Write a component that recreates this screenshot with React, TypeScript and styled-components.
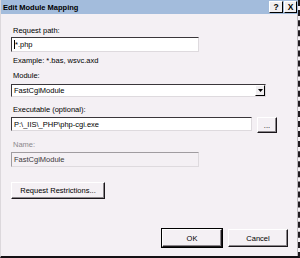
import styled, { createGlobalStyle } from "styled-components";

const GlobalStyle = createGlobalStyle`
  html, body {
    margin: 0;
    padding: 0;
    background: #f4f0f4;
  }
  body {
    font-family: "Liberation Sans", Arial, sans-serif;
    font-size: 7.5px;
    color: #000000;
  }
`;

export default function App() {
  return (
    <>
      <GlobalStyle />
      <Window>
        <TitleBar>
          <Title>Edit Module Mapping</Title>
          <CaptionButtons>
            <CaptionButton $width={14}>?</CaptionButton>
            <CaptionButton $width={13}>X</CaptionButton>
          </CaptionButtons>
        </TitleBar>
        <Body>
          <Label>Request path:</Label>
          <TextBox $width={188} $height={15} $top={2}>
            <Caret />*.php
          </TextBox>
          <Hint>Example: *.bas, wsvc.axd</Hint>

          <Label $top={6}>Module:</Label>
          <SelectBox>
            FastCgiModule
            <DropArrow>
              <svg width="5" height="3" viewBox="0 0 5 3">
                <path d="M0 0 H5 L2.5 3 Z" fill="#000" />
              </svg>
            </DropArrow>
          </SelectBox>

          <Label $top={8}>Executable (optional):</Label>
          <Row>
            <TextBox $width={241} $height={14}>
              P:\_IIS\_PHP\php-cgi.exe
            </TextBox>
            <PushButton $width={20} $height={16}>
              ...
            </PushButton>
          </Row>

          <Label $top={7} $disabled>
            Name:
          </Label>
          <TextBox $width={188} $height={15} $top={3} $disabled>
            FastCgiModule
          </TextBox>

          <ButtonSlot>
            <PushButton $width={94} $height={17}>
              Request Restrictions...
            </PushButton>
          </ButtonSlot>

          <Footer>
            <PushButton $width={60} $height={18} $default>
              OK
            </PushButton>
            <PushButton $width={60} $height={18}>
              Cancel
            </PushButton>
          </Footer>
        </Body>
      </Window>
    </>
  );
}

const Window = styled.div`
  width: 300px;
  height: 258px;
  box-sizing: border-box;
  background: #f4f0f4;
  border-left: 1px solid #dcd8dc;
  border-right: 2px dashed #1e1a1e;
  border-bottom: 2px solid #141014;
  box-shadow: inset -1px 0 0 #bdb9bd;
  display: flex;
  flex-direction: column;
  overflow: hidden;
`;

const TitleBar = styled.div`
  height: 14px;
  background: #a3bcdc;
  display: flex;
  align-items: center;
  justify-content: space-between;
  padding-left: 2px;
  padding-right: 1px;
`;

const Title = styled.span`
  font-weight: 700;
  font-size: 7.5px;
  color: #000000;
`;

const CaptionButtons = styled.div`
  display: flex;
  gap: 1px;
`;

const CaptionButton = styled.div<{ $width: number }>`
  width: ${(p) => p.$width}px;
  height: 12px;
  box-sizing: border-box;
  background: #f0eef0;
  border-top: 1px solid #ffffff;
  border-left: 1px solid #ffffff;
  border-right: 1px solid #000000;
  border-bottom: 1px solid #000000;
  display: flex;
  align-items: center;
  justify-content: center;
  font-weight: 700;
  font-size: 8.5px;
  line-height: 1;
`;

const Body = styled.div`
  flex: 1;
  display: flex;
  flex-direction: column;
  align-items: flex-start;
  padding: 12px 10px 0 10px;
`;

const Label = styled.div<{ $top?: number; $disabled?: boolean }>`
  height: 9px;
  line-height: 9px;
  padding-left: 2px;
  margin-top: ${(p) => p.$top ?? 0}px;
  color: ${(p) => (p.$disabled ? "#8c888c" : "#000000")};
`;

const TextBox = styled.div<{
  $width: number;
  $height: number;
  $top?: number;
  $disabled?: boolean;
}>`
  width: ${(p) => p.$width}px;
  height: ${(p) => p.$height}px;
  margin-top: ${(p) => p.$top ?? 0}px;
  box-sizing: border-box;
  background: ${(p) => (p.$disabled ? "#f4f0f4" : "#ffffff")};
  border-top: 1px solid ${(p) => (p.$disabled ? "#a09ca0" : "#3a363a")};
  border-left: 1px solid ${(p) => (p.$disabled ? "#a09ca0" : "#3a363a")};
  border-right: 1px solid #dedade;
  border-bottom: 1px solid #dedade;
  padding-left: 2px;
  display: flex;
  align-items: center;
  color: ${(p) => (p.$disabled ? "#3c383c" : "#000000")};
  white-space: nowrap;
`;

const Caret = styled.span`
  display: inline-block;
  width: 1px;
  height: 9px;
  background: #000000;
`;

const Hint = styled.div`
  height: 9px;
  line-height: 9px;
  margin-top: 4px;
  padding-left: 2px;
`;

const SelectBox = styled.div`
  width: 255px;
  height: 13px;
  margin-top: 4px;
  box-sizing: border-box;
  background: #ffffff;
  border-top: 1px solid #3a363a;
  border-left: 1px solid #3a363a;
  border-right: 1px solid #dedade;
  border-bottom: 1px solid #dedade;
  padding-left: 2px;
  display: flex;
  align-items: center;
  justify-content: space-between;
`;

const DropArrow = styled.div`
  width: 10px;
  height: 11px;
  box-sizing: border-box;
  background: #f0eef0;
  border-top: 1px solid #ffffff;
  border-left: 1px solid #ffffff;
  border-right: 1px solid #000000;
  border-bottom: 1px solid #000000;
  display: flex;
  align-items: center;
  justify-content: center;
`;

const Row = styled.div`
  display: flex;
  align-items: flex-start;
  gap: 5px;
  margin-top: 3px;
`;

const PushButton = styled.div<{
  $width: number;
  $height: number;
  $default?: boolean;
}>`
  width: ${(p) => p.$width}px;
  height: ${(p) => p.$height}px;
  box-sizing: border-box;
  background: #f4f0f4;
  border-top: 1px solid #ffffff;
  border-left: 1px solid #ffffff;
  border-right: 1px solid #1a161a;
  border-bottom: 1px solid #1a161a;
  box-shadow: ${(p) =>
    p.$default
      ? "0 0 0 1px #000000, inset -1px -1px 0 #8a868a"
      : "inset -1px -1px 0 #8a868a"};
  display: flex;
  align-items: center;
  justify-content: center;
  white-space: nowrap;
`;

const ButtonSlot = styled.div`
  margin-top: 15px;
`;

const Footer = styled.div`
  align-self: stretch;
  display: flex;
  justify-content: flex-end;
  gap: 6px;
  margin-top: 30px;
`;
